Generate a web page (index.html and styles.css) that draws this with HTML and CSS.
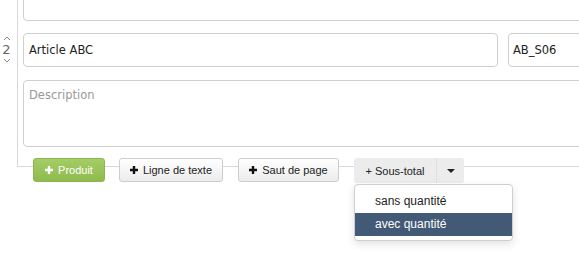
FILE: index.html
```html
<!DOCTYPE html>
<html lang="fr">
<head>
<meta charset="utf-8">
<title>Lignes</title>
<link rel="stylesheet" href="styles.css">
</head>
<body>
<div class="page">
  <div class="item">
    <div class="gutter">
      <div class="pos">
        <svg class="chev" width="8" height="5" viewBox="0 0 8 5"><path d="M1 4 L4 1 L7 4" fill="none" stroke="#888" stroke-width="1"/></svg>
        <span class="num">2</span>
        <svg class="chev" width="8" height="5" viewBox="0 0 8 5"><path d="M1 1 L4 4 L7 1" fill="none" stroke="#888" stroke-width="1"/></svg>
      </div>
    </div>
    <div class="content">
      <div class="field top-area"></div>
      <div class="inputs">
        <div class="field name">Article ABC</div>
        <div class="field ref">AB_S06</div>
      </div>
      <div class="field desc placeholder">Description</div>
    </div>
  </div>
  <div class="toolbar">
    <button class="btn btn-green"><svg class="plus" width="8" height="8" viewBox="0 0 8 8"><path d="M4 0 V8 M0 4 H8" stroke="#fff" stroke-width="2.4"/></svg>Produit</button>
    <button class="btn btn-line"><svg class="plus" width="8" height="8" viewBox="0 0 8 8"><path d="M4 0 V8 M0 4 H8" stroke="#111" stroke-width="2.4"/></svg>Ligne de texte</button>
    <button class="btn btn-page"><svg class="plus" width="8" height="8" viewBox="0 0 8 8"><path d="M4 0 V8 M0 4 H8" stroke="#111" stroke-width="2.4"/></svg>Saut de page</button>
    <div class="split">
      <div class="split-row">
        <button class="flat main">+ Sous-total</button>
        <button class="flat caret"><svg width="8" height="4" viewBox="0 0 8 4"><path d="M0 0 H8 L4 4 Z" fill="#222"/></svg></button>
      </div>
      <div class="menu">
        <div class="menu-item">sans quantité</div>
        <div class="menu-item active">avec quantité</div>
      </div>
    </div>
  </div>
</div>
</body>
</html>
```
FILE: styles.css
```css
html, body {
  margin: 0;
  padding: 0;
  background: #fff;
  overflow: hidden;
}
.page {
  width: 579px;
  height: 266px;
  overflow: hidden;
  font-family: "DejaVu Sans", Verdana, sans-serif;
}
.item {
  display: flex;
  width: 640px;
}
.gutter {
  width: 17px;
  flex: none;
}
.pos {
  display: flex;
  flex-direction: column;
  align-items: center;
  width: 13px;
  margin-top: 36px;
  color: #666;
}
.chev { display: block; }
.num {
  font-size: 13px;
  line-height: 15px;
  font-family: "DejaVu Sans", sans-serif;
  color: #666;
  margin: 1px 0;
}
.content {
  flex: 1;
  border-left: 1px solid #d8d8d8;
  border-bottom: 1px solid #d8d8d8;
  padding: 0 0 18px 5px;
  height: 148px;
  display: flex;
  flex-direction: column;
}
.field {
  border: 1px solid #cfcfcf;
  border-radius: 4px;
  background: #fff;
  box-sizing: border-box;
  font-size: 11.5px;
  color: #222;
  padding: 0 5px;
}
.top-area {
  height: 40px;
  margin-top: -19px;
}
.inputs {
  display: flex;
  gap: 10px;
  margin-top: 12px;
}
.name {
  width: 475px;
  height: 34px;
  line-height: 32px;
  flex: none;
}
.ref {
  flex: 1;
  height: 34px;
  line-height: 32px;
  padding-left: 4px;
}
.desc {
  margin-top: 13px;
  height: 67px;
  padding-top: 7px;
}
.placeholder { color: #999; }
.toolbar {
  display: flex;
  align-items: flex-start;
  gap: 14px;
  margin-top: -9px;
  padding-left: 33px;
  font-family: "Liberation Sans", Arial, sans-serif;
}
.btn {
  height: 24px;
  box-sizing: border-box;
  border: 1px solid #cdcdcd;
  border-radius: 3px;
  background: linear-gradient(#ffffff, #ececec);
  font-family: "Liberation Sans", Arial, sans-serif;
  font-size: 11px;
  color: #222;
  padding: 0;
  display: flex;
  align-items: center;
  justify-content: center;
  gap: 5px;
  margin: 0;
  white-space: nowrap;
  flex: none;
}
.btn-green {
  width: 72px;
  background: linear-gradient(#a4cd66, #8fbb4d);
  border-color: #8eb64e;
  color: #fff;
}
.btn-line { width: 104px; }
.btn-page { width: 101px; margin-left: 1px; }
.plus { flex: none; display: block; }
.split {
  margin-left: 1px;
  position: relative;
}
.split-row {
  display: flex;
}
.flat {
  height: 25px;
  border: none;
  background: #ececec;
  font-family: "Liberation Sans", Arial, sans-serif;
  font-size: 11px;
  color: #222;
  margin: 0;
  padding: 0;
  white-space: nowrap;
}
.main {
  width: 83px;
  border-radius: 3px 0 0 3px;
  border-right: 1px solid #e0e0e0;
}
.caret {
  width: 27px;
  border-radius: 0 3px 3px 0;
  display: flex;
  align-items: center;
  justify-content: center;
}
.caret svg { display: block; }
.menu {
  position: absolute;
  left: 0;
  top: 26px;
  width: 159px;
  box-sizing: border-box;
  border: 1px solid #cfcfcf;
  border-radius: 4px;
  background: #fff;
  box-shadow: 0 3px 8px rgba(0,0,0,0.12);
  padding: 5px 0 4px;
}
.menu-item {
  height: 23px;
  line-height: 23px;
  padding-left: 20px;
  font-size: 12px;
  color: #222;
}
.menu-item.active {
  background: #425a76;
  color: #fff;
}
```
